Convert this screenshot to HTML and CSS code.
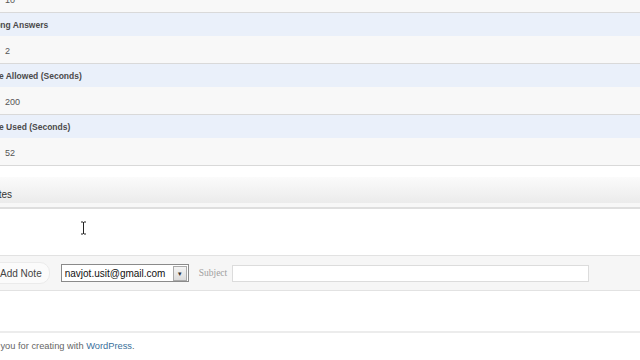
FILE: index.html
```html
<!DOCTYPE html>
<html lang="en">
<head>
  <meta charset="UTF-8" />
  <title>Quiz Result</title>
  <link rel="stylesheet" href="styles.css">
</head>
<body>
  <div class="wrap">
    <table class="result">
      <tr class="value"><td>10</td></tr>
      <tr class="label"><th>Wrong Answers</th></tr>
      <tr class="value"><td>2</td></tr>
      <tr class="label"><th>Time Allowed (Seconds)</th></tr>
      <tr class="value"><td>200</td></tr>
      <tr class="label"><th>Time Used (Seconds)</th></tr>
      <tr class="value"><td>52</td></tr>
    </table>

    <div class="notes">
      <h3 class="notes-title">Notes</h3>
      <div class="notes-list"></div>
      <div class="note-bar">
        <button class="btn">Add Note</button>
        <div class="select">
          <span>navjot.usit@gmail.com</span>
          <span class="arrow">&#9662;</span>
        </div>
        <label class="subject-label">Subject</label>
        <input class="subject" type="text">
      </div>
    </div>

    <div class="footer">
      <p>Thank you for creating with <a href="#">WordPress</a>.</p>
    </div>
  </div>

  <svg class="cursor" width="7" height="14" viewBox="0 0 7 14">
    <path d="M1 1h2M4 1h2M3.5 1v12M1 13h2M4 13h2" stroke="#222" stroke-width="1" fill="none"/>
  </svg>
</body>
</html>
```

FILE: styles.css
```css
html, body {
  margin: 0;
  height: 100%;
  overflow: hidden;
  background: white;
  font-family: "Liberation Sans", Arial, sans-serif;
  color: #333;
}

.wrap {
  margin-left: -20px;
  margin-top: -15px;
}

.result {
  width: 680px;
  border-collapse: collapse;
}

.result th,
.result td {
  text-align: left;
  padding: 0;
}

.result .label th {
  height: 23px;
  padding-left: 4px;
  background: #eaf0fa;
  font-size: 8.5px;
  font-weight: bold;
  color: #4a4a4a;
  border-top: 1px solid #ececec;
}

.result .value td {
  height: 25px;
  padding: 2px 0 0 25px;
  background: #f8f8f8;
  font-size: 9px;
  color: #555;
  border-bottom: 1px solid #d9d9d9;
}

.notes {
  margin-top: 11px;
}

.notes-title {
  margin: 0;
  height: 26px;
  line-height: 36px;
  padding-left: 6px;
  font-size: 10px;
  font-weight: normal;
  color: #333;
  background: linear-gradient(#fbfbfb, #ebebeb);
  border-bottom: 4px solid #f7f7f7;
  box-shadow: 0 2px 0 #dedede;
}

.notes-list {
  height: 48px;
}

.note-bar {
  display: flex;
  align-items: center;
  height: 34px;
  background: #f6f6f6;
  border-top: 1px solid #e2e2e2;
  border-bottom: 1px solid #e2e2e2;
  padding-left: 10px;
}

.btn {
  height: 22px;
  padding: 0 7px 0 9px;
  font-family: "Liberation Sans", Arial, sans-serif;
  font-size: 10px;
  color: #444;
  background: #fbfbfb;
  border: 1px solid #ebebeb;
  border-radius: 10px;
}

.select {
  display: flex;
  align-items: center;
  margin-left: 11px;
  height: 18px;
  width: 128px;
  background: white;
  border: 1px solid #8a8a8a;
  font-size: 10px;
  color: #111;
  padding-left: 3px;
  box-sizing: border-box;
  justify-content: space-between;
}

.select .arrow {
  width: 12px;
  height: 13px;
  margin-right: 1px;
  border: 1px solid #aaa;
  background: linear-gradient(#f4f4f4, #dcdcdc);
  font-size: 7px;
  line-height: 13px;
  text-align: center;
  color: #333;
}

.subject-label {
  margin-left: 10px;
  font-family: "Liberation Serif", serif;
  font-size: 9.5px;
  color: #a0a0a0;
}

.subject {
  margin-left: 5px;
  width: 357px;
  height: 17px;
  box-sizing: border-box;
  border: 1px solid #dcdcdc;
  background: white;
}

.footer {
  margin-top: 40px;
  border-top: 2px solid #ececec;
}

.footer p {
  margin: 8px 0 0 -8px;
  font-size: 9.3px;
  color: #666;
}

.footer a {
  color: #3a6f9b;
  text-decoration: none;
}

.cursor {
  position: absolute;
  left: 80px;
  top: 221px;
}
```
